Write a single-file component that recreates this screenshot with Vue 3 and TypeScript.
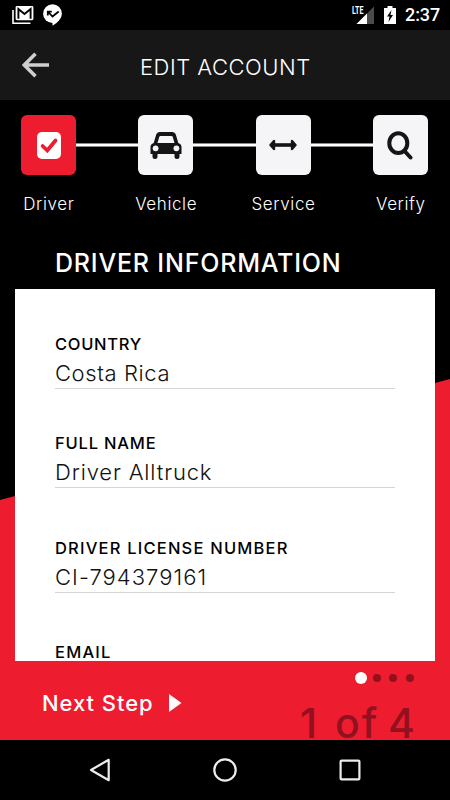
<script setup lang="ts">
interface Step {
  name: string
  icon: 'check' | 'car' | 'arrows' | 'search'
}
interface Field {
  id: string
  label: string
  value: string
}

const steps: Step[] = [
  { name: 'Driver', icon: 'check' },
  { name: 'Vehicle', icon: 'car' },
  { name: 'Service', icon: 'arrows' },
  { name: 'Verify', icon: 'search' },
]
const current = 0
const fields: Field[] = [
  { id: 'country', label: 'COUNTRY', value: 'Costa Rica' },
  { id: 'fullname', label: 'FULL NAME', value: 'Driver Alltruck' },
  { id: 'license', label: 'DRIVER LICENSE NUMBER', value: 'CI-794379161' },
  { id: 'email', label: 'EMAIL', value: '' },
]
</script>

<template>
  <div class="screen">
    <div class="status">
      <svg class="gmail" width="22" height="20" viewBox="0 0 22 20">
        <path d="M1 5v13.2h17.5" fill="none" stroke="#fff" stroke-width="1.6" />
        <rect x="3.6" y="1" width="17.8" height="14.2" rx="1.4" fill="#fff" />
        <path d="M6.4 13.8V4l6.1 5 6.1-5v9.8" fill="none" stroke="#000" stroke-width="1.9" />
      </svg>
      <svg class="bubble" width="20" height="22" viewBox="0 0 20 22">
        <circle cx="9.500" cy="9.700" r="9.400" fill="#fff" />
        <path d="M9.500 17v4.800q4-2 6.500-5.500Z" fill="#fff" />
        <path d="M4.800 11.600V7.600h4M5.300 8l4.200 4.500 6.200-5" fill="none" stroke="#000" stroke-width="1.800" />
      </svg>
      <span class="spacer"></span>
      <svg class="signal" width="24" height="20" viewBox="0 0 24 20">
        <path d="M4.500 19 22 1.500V19Z" fill="#4b4b4b" />
        <path d="M4.500 19 15 8.500V19Z" fill="#fff" />
        <text x="0" y="9.200" class="lte" textLength="11.500" lengthAdjust="spacingAndGlyphs">LTE</text>
      </svg>
      <svg class="battery" width="12" height="18" viewBox="0 0 12 18">
        <path d="M3.500 0h5v2H12v16H0V2h3.500Z" fill="#fff" />
        <path d="M7.500 4 3 10.500h2.500L4.500 16 9 9H6.500Z" fill="#000" />
      </svg>
      <span class="clock">2:37</span>
    </div>

    <header class="bar">
      <svg class="back" width="28" height="28" viewBox="0 0 28 28">
        <path
          d="M13.500 2.800 2.300 14l11.200 11.200M3 14h24"
          fill="none"
          stroke="#cfcfcf"
          stroke-width="3.600"
        />
      </svg>
      <h1>EDIT ACCOUNT</h1>
    </header>

    <main class="body">
      <nav class="steps">
        <template v-for="(s, i) in steps" :key="s.name">
          <span v-if="i" class="link"></span>
          <div class="step" :class="{ active: i === current }">
            <div class="tile">
              <svg v-if="s.icon === 'check'" width="24" height="27" viewBox="0 0 24 27">
                <rect width="24" height="27" rx="5" fill="#fff" />
                <path
                  d="m5.600 14 4.700 4.500L18.500 8.500"
                  fill="none"
                  stroke="#ed1c2f"
                  stroke-width="3.800"
                  stroke-linecap="round"
                />
              </svg>
              <svg v-else-if="s.icon === 'car'" width="32" height="27" viewBox="0 0 32 27">
                <path
                  d="M9.500 0h13Q25 0 25.800 2.500L28.300 11Q31.500 12 31.500 15v7h-2v2.500Q29.500 27 27 27t-2.500-2.500V22h-17v2.500Q7.500 27 5 27t-2.500-2.500V22h-2v-7q0-3 3.200-4L6.200 2.500Q7 0 9.500 0Z"
                  fill="#151515"
                />
                <path d="M10.500 4h11q1 0 1.300 1l1.700 6h-17l1.700-6q.3-1 1.300-1Z" fill="#f5f5f8" />
                <circle cx="5.600" cy="16.300" r="2.900" fill="#f5f5f8" />
                <circle cx="26.400" cy="16.300" r="2.900" fill="#f5f5f8" />
              </svg>
              <svg v-else-if="s.icon === 'arrows'" width="28" height="12" viewBox="0 0 28 12">
                <path d="M5 6h18" stroke="#151515" stroke-width="3.600" />
                <path
                  d="M1.500 6 5 2v8ZM26.500 6 23 2v8Z"
                  fill="#151515"
                  stroke="#151515"
                  stroke-width="2.400"
                  stroke-linejoin="round"
                />
              </svg>
              <svg v-else width="26" height="29" viewBox="0 0 26 29">
                <ellipse cx="11.300" cy="12.200" rx="9" ry="9.900" fill="none" stroke="#151515" stroke-width="4" />
                <path d="m17.500 20 6 6.500" stroke="#151515" stroke-width="4" stroke-linecap="round" />
              </svg>
            </div>
            <span class="name">{{ s.name }}</span>
          </div>
        </template>
      </nav>

      <h2>DRIVER INFORMATION</h2>

      <section class="card">
        <div v-for="f in fields" :key="f.id" class="field" :class="f.id">
          <span class="label">{{ f.label }}</span>
          <div class="value">{{ f.value }}</div>
        </div>
      </section>

      <footer class="foot">
        <div class="next">
          <span>Next Step</span>
          <svg width="13" height="18" viewBox="0 0 13 18"><path d="M0 0 12.500 9 0 18Z" fill="#fff" /></svg>
        </div>
        <div class="progress">
          <div class="dots">
            <i v-for="(s, i) in steps" :key="s.name" :class="{ on: i === current }"></i>
          </div>
          <div class="count"><span>1</span><span class="of">of</span><span>4</span></div>
        </div>
      </footer>
    </main>

    <div class="navbar">
      <svg width="24" height="26" viewBox="0 0 24 26">
        <path d="M3 13 20.700 2.800v20.400Z" fill="none" stroke="#ececec" stroke-width="2.200" stroke-linejoin="round" />
      </svg>
      <svg width="26" height="26" viewBox="0 0 26 26">
        <circle cx="13" cy="13" r="10.700" fill="none" stroke="#ececec" stroke-width="2.200" />
      </svg>
      <svg width="24" height="24" viewBox="0 0 24 24">
        <rect x="2.600" y="2.600" width="18.800" height="18.800" rx="1" fill="none" stroke="#ececec" stroke-width="2.200" />
      </svg>
    </div>
  </div>
</template>

<style>
body {
  margin: 0;
  background: #000;
}
</style>

<style scoped>
.screen {
  width: 450px;
  height: 800px;
  display: flex;
  flex-direction: column;
  overflow: hidden;
  background: #000;
  color: #fff;
  font-family: Inter, 'Liberation Sans', sans-serif;
  white-space: nowrap;
}
svg {
  display: block;
  flex: none;
}
.status {
  height: 30px;
  box-sizing: border-box;
  padding: 0 11px 0 12px;
  display: flex;
  align-items: center;
}
.gmail {
  margin-right: 9px;
}
.spacer {
  flex: 1;
}
.lte {
  font: 700 10px Roboto, sans-serif;
  fill: #fff;
}
.signal {
  margin-right: 8px;
  margin-bottom: 1px;
}
.battery {
  margin-right: 9px;
}
.clock {
  width: 34px;
  font: 500 18px/30px Roboto, sans-serif;
  letter-spacing: -0.1px;
}
.bar {
  height: 70px;
  display: flex;
  align-items: center;
  background: #171717;
}
.back {
  margin-left: 22px;
  margin-right: 90px;
}
h1,
h2 {
  margin: 0;
}
h1 {
  font-size: 22px;
  line-height: 30px;
  font-weight: 300;
  letter-spacing: 0.5px;
  padding-top: 4px;
}
.body {
  height: 640px;
  display: flex;
  flex-direction: column;
  background: #ed1c2f;
  position: relative;
  z-index: 0;
}
.body::before {
  content: '';
  position: absolute;
  inset: 0;
  z-index: -1;
  background: #000;
  clip-path: polygon(0 0, 100% 0, 100% 279px, 0 400px);
}
.steps {
  display: flex;
  padding: 15px 22px 0 21px;
  height: 130px;
  box-sizing: border-box;
}
.step {
  width: 55px;
  display: flex;
  flex-direction: column;
  align-items: center;
}
.link {
  flex: 1;
  height: 4px;
  margin-top: 28px;
  background: #fff;
  box-sizing: border-box;
  border-top: 1px solid #888;
  border-bottom: 1px solid #888;
}
.tile {
  width: 55px;
  height: 60px;
  border-radius: 6px;
  background: #f5f5f8;
  display: flex;
  align-items: center;
  justify-content: center;
}
.active .tile {
  background: #ed1c2f;
}
.name {
  margin-top: 17px;
  font-size: 17px;
  line-height: 24px;
  font-weight: 300;
  letter-spacing: 0.6px;
  margin-right: -0.6px;
}
h2 {
  padding: 17px 0 0 55px;
  font-size: 25px;
  line-height: 32px;
  font-weight: 500;
  height: 59px;
  box-sizing: border-box;
  letter-spacing: 0.8px;
}
.card {
  height: 372px;
  box-sizing: border-box;
  margin: 0 15px;
  padding: 43.500px 40px 0;
  background: #fff;
  color: #111;
  overflow: hidden;
  flex: none;
}
.field {
  height: 99.500px;
}
.field.fullname {
  height: 105px;
}
.field.license {
  height: 104px;
}
.label {
  display: block;
  font-size: 16.500px;
  line-height: 22px;
  font-weight: 500;
  color: #000;
  letter-spacing: 0.7px;
}
.fullname .label {
  letter-spacing: 0.800px;
}
.license .label {
  letter-spacing: 1.200px;
}
.email .label {
  letter-spacing: 1.200px;
}
.value {
  height: 34px;
  box-sizing: border-box;
  border-bottom: 1px solid #d5d5d5;
  font-size: 22px;
  line-height: 36px;
  font-weight: 300;
  letter-spacing: 0.6px;
}
.fullname .value {
  letter-spacing: 0.850px;
}
.license .value {
  letter-spacing: 1.050px;
}
.foot {
  flex: 1;
  min-height: 0;
  display: flex;
  justify-content: space-between;
  padding: 0 35px 0 42px;
}
.next {
  display: flex;
  align-items: center;
  gap: 15.500px;
  height: 83px;
  font-size: 22px;
  font-weight: 500;
  letter-spacing: 0.950px;
}
.progress {
  width: 115px;
}
.dots {
  height: 12px;
  margin-top: 11px;
  display: flex;
  align-items: center;
  justify-content: flex-end;
  gap: 8.300px;
  padding-right: 1.500px;
}
.dots i {
  width: 8px;
  height: 8px;
  border-radius: 50%;
  background: #92101f;
}
.dots .on {
  width: 12px;
  height: 12px;
  margin-right: -2px;
  background: #fff;
}
.count {
  display: flex;
  justify-content: space-between;
  height: 56px;
  font-size: 41px;
  line-height: 50px;
  margin-top: 14px;
  font-weight: 500;
  color: #92101f;
}
.of {
  letter-spacing: 2px;
  margin-left: 9px;
}
.navbar {
  height: 60px;
  display: flex;
  align-items: center;
  justify-content: space-between;
  padding: 0 88px;
}
</style>
